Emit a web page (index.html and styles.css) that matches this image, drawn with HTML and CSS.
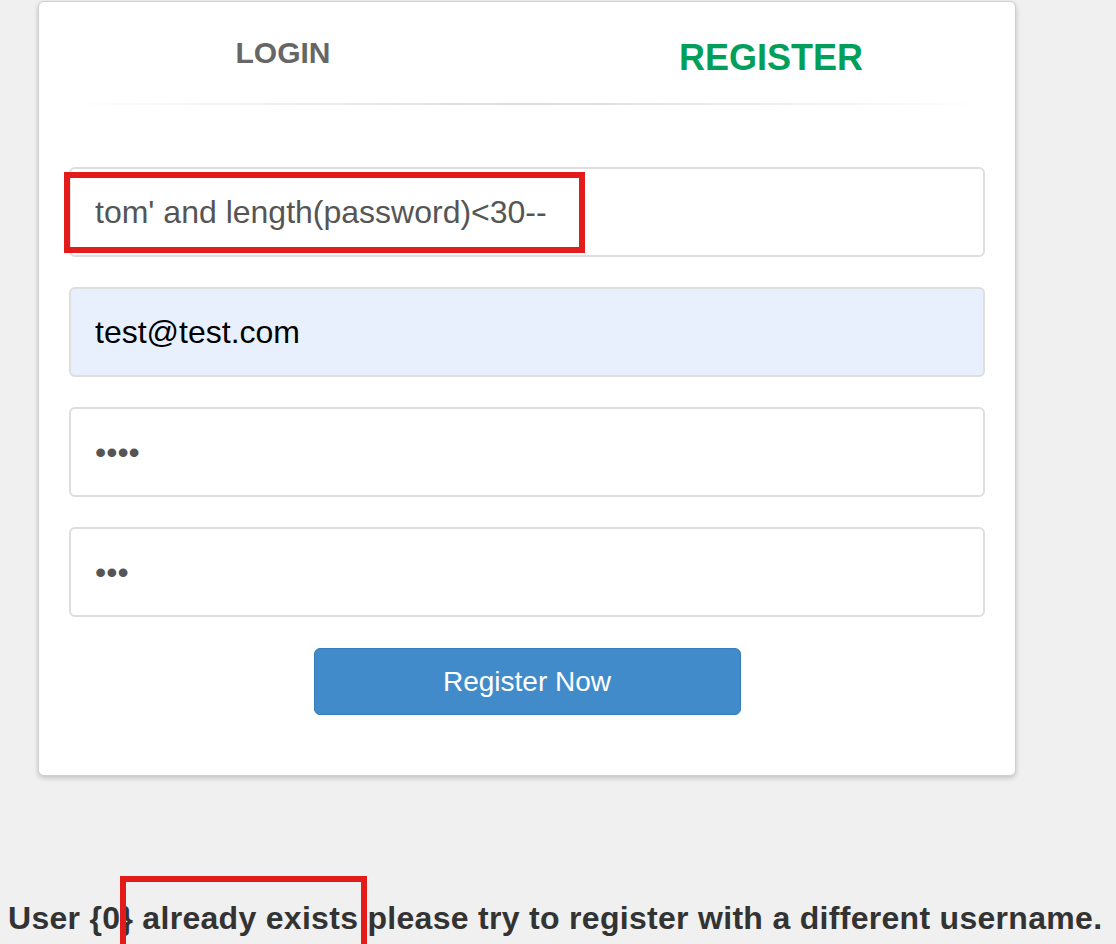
FILE: index.html
```html
<!DOCTYPE html>
<html lang="en">
<head>
    <meta charset="UTF-8">
    <meta name="viewport" content="width=device-width, initial-scale=1.0">
    <title>Register</title>
    <link rel="stylesheet" href="styles.css">
</head>
<body>

    <div class="card">
        <!-- Tabs -->
        <div class="tabs">
            <div class="tab tab-login">LOGIN</div>
            <div class="tab tab-register">REGISTER</div>
        </div>
        <div class="divider"></div>

        <!-- Register form -->
        <form class="register-form">
            <input type="text" class="field" value="tom' and length(password)<30--">
            <input type="email" class="field field-autofill" value="test@test.com">
            <input type="password" class="field" value="test">
            <input type="password" class="field" value="tes">
            <button type="button" class="btn-register">Register Now</button>
        </form>
    </div>

    <p class="message">User {0} already exists please try to register with a different username.</p>

    <!-- annotation boxes -->
    <div class="mark mark-input"></div>
    <div class="mark mark-message"></div>

</body>
</html>
```

FILE: styles.css
```css
* {
    margin: 0;
    padding: 0;
    box-sizing: border-box;
}

body {
    font-family: "Liberation Sans", Arial, sans-serif;
    background-color: #f0f0f0;
    height: 944px;
    overflow: hidden;
    position: relative;
}

.card {
    width: 978px;
    margin: 1px 0 0 38px;
    background-color: white;
    border: 1px solid #cfcfcf;
    border-radius: 6px;
    box-shadow: 0 2px 5px rgba(0, 0, 0, 0.2);
    padding-bottom: 60px;
}

.tabs {
    display: flex;
    height: 101px;
}

.tab {
    flex: 1;
    text-align: center;
    font-weight: bold;
    line-height: 1;
}

.tab-login {
    font-size: 30px;
    color: #666;
    padding-top: 36px;
}

.tab-register {
    font-size: 36px;
    color: #029f5b;
    padding-top: 38px;
}

.divider {
    height: 2px;
    margin: 0 30px;
    background: linear-gradient(to right, rgba(221, 221, 221, 0), #dcdcdc 50%, rgba(221, 221, 221, 0));
}

.register-form {
    display: flex;
    flex-direction: column;
    align-items: center;
    gap: 30px;
    padding: 62px 30px 0;
}

.field {
    width: 100%;
    height: 90px;
    padding: 0 24px;
    border: 2px solid #dedede;
    border-radius: 6px;
    font-family: "Liberation Sans", Arial, sans-serif;
    font-size: 32px;
    color: #555;
    background-color: white;
    outline: none;
}

.field-autofill {
    background-color: #e8f0fe;
    color: black;
}

.btn-register {
    width: 427px;
    height: 67px;
    margin-top: 1px;
    background-color: #428bca;
    border: 1px solid #357ebd;
    border-radius: 6px;
    color: white;
    font-family: "Liberation Sans", Arial, sans-serif;
    font-size: 28px;
    cursor: pointer;
}

.message {
    margin: 124px 0 0 8px;
    font-size: 32px;
    font-weight: bold;
    letter-spacing: 0.3px;
    color: #333;
    white-space: nowrap;
}

.mark {
    position: absolute;
    border: 6px solid #e41b1b;
}

.mark-input {
    left: 64px;
    top: 172px;
    width: 521px;
    height: 81px;
}

.mark-message {
    left: 120px;
    top: 876px;
    width: 247px;
    height: 90px;
}
```
